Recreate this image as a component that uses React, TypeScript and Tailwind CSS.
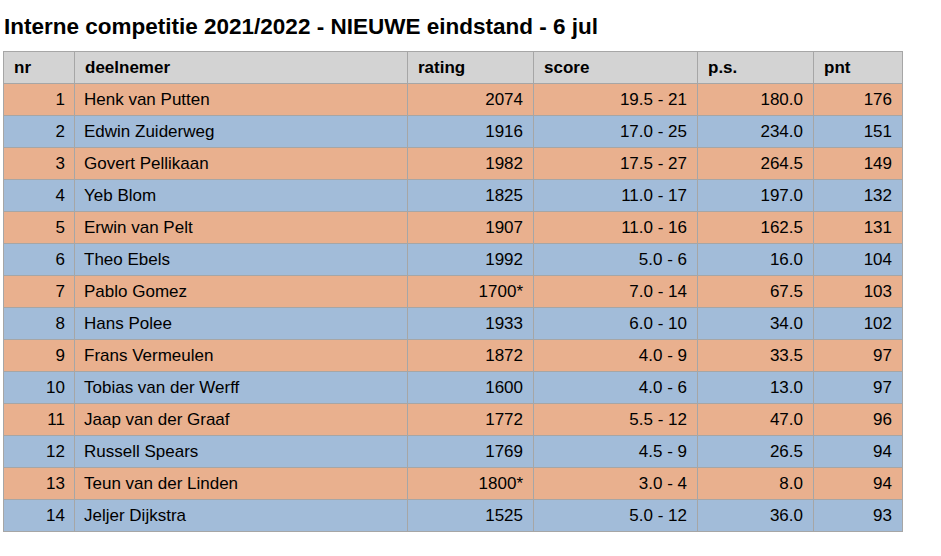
import React from "react";

const rows = [
  [1, "Henk van Putten", "2074", "19.5 - 21", "180.0", 176],
  [2, "Edwin Zuiderweg", "1916", "17.0 - 25", "234.0", 151],
  [3, "Govert Pellikaan", "1982", "17.5 - 27", "264.5", 149],
  [4, "Yeb Blom", "1825", "11.0 - 17", "197.0", 132],
  [5, "Erwin van Pelt", "1907", "11.0 - 16", "162.5", 131],
  [6, "Theo Ebels", "1992", "5.0 - 6", "16.0", 104],
  [7, "Pablo Gomez", "1700*", "7.0 - 14", "67.5", 103],
  [8, "Hans Polee", "1933", "6.0 - 10", "34.0", 102],
  [9, "Frans Vermeulen", "1872", "4.0 - 9", "33.5", 97],
  [10, "Tobias van der Werff", "1600", "4.0 - 6", "13.0", 97],
  [11, "Jaap van der Graaf", "1772", "5.5 - 12", "47.0", 96],
  [12, "Russell Spears", "1769", "4.5 - 9", "26.5", 94],
  [13, "Teun van der Linden", "1800*", "3.0 - 4", "8.0", 94],
  [14, "Jeljer Dijkstra", "1525", "5.0 - 12", "36.0", 93],
];

const headers = [
  { name: "nr", w: "w-[71px]" },
  { name: "deelnemer", w: "w-[333px]" },
  { name: "rating", w: "w-[126px]" },
  { name: "score", w: "w-[164px]" },
  { name: "p.s.", w: "w-[116px]" },
  { name: "pnt", w: "w-[89px]" },
];

export default function App() {
  return (
    <div className="w-[941px] h-[556px] bg-white text-black font-['Liberation_Sans',Arial,sans-serif]">
      <h1 className="pt-[14px] pl-[4px] text-[22.5px] leading-[26px] font-bold">
        Interne competitie 2021/2022 - NIEUWE eindstand - 6 jul
      </h1>
      <table className="ml-[3px] mt-[11px] table-fixed border-collapse w-[900px] text-[17px]">
        <thead>
          <tr className="bg-[#d3d3d3] h-[32px]">
            {headers.map((h) => (
              <th
                key={h.name}
                className={`${h.w} border border-[#a6a6a6] px-[10px] text-left font-bold`}
              >
                {h.name}
              </th>
            ))}
          </tr>
        </thead>
        <tbody>
          {rows.map((r, i) => (
            <tr
              key={i}
              className={`h-[32px] ${i % 2 === 0 ? "bg-[#e9b08e]" : "bg-[#a2bcd9]"}`}
            >
              <td className="border border-[#a6a6a6] pr-[9px] text-right">{r[0]}</td>
              <td className="border border-[#a6a6a6] pl-[9px] text-left">{r[1]}</td>
              <td className="border border-[#a6a6a6] pr-[10px] text-right">{r[2]}</td>
              <td className="border border-[#a6a6a6] pr-[10px] text-right">{r[3]}</td>
              <td className="border border-[#a6a6a6] pr-[10px] text-right">{r[4]}</td>
              <td className="border border-[#a6a6a6] pr-[10px] text-right">{r[5]}</td>
            </tr>
          ))}
        </tbody>
      </table>
    </div>
  );
}
